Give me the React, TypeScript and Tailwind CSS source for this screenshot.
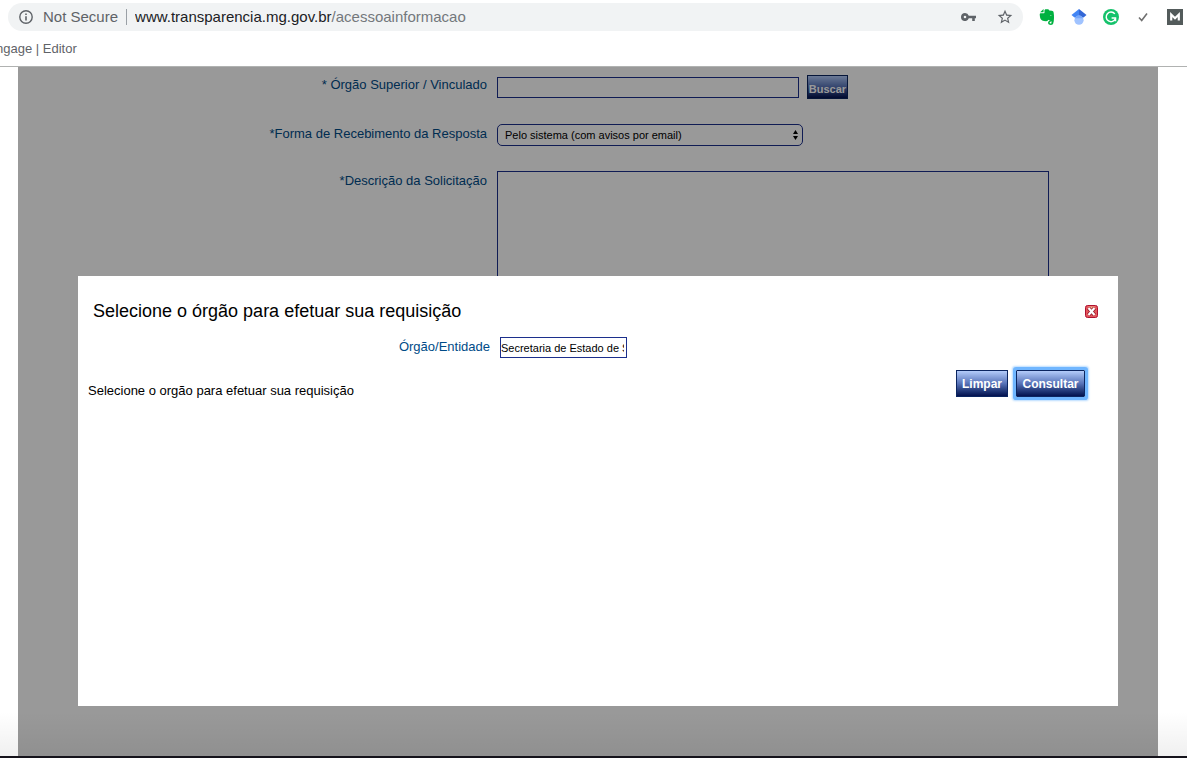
import { useState } from 'react'

const fieldBorder = 'border border-[#1c2f8c] bg-white text-black outline-none'
const buttonStyle =
  'border border-[#0b2560] bg-linear-to-b from-[#b4ccfa] via-[#5873b8] to-[#05114f] font-bold text-white'

function EvernoteIcon() {
  return (
    <svg width="16" height="16" viewBox="0 0 24 24" fill="#00b140" aria-hidden="true">
      <path d="M8.2 5.6V2.4C8.2 1.2 9 .3 10.200 .3h2.500c1.400 0 2.300.8 2.700 2l3.800.5c1.600.2 2.500 1.100 2.800 2.700.5 2.700.6 5.300.5 8-.1 3.300-.4 6.300-1.300 8.800-.5 1.200-1.500 1.700-3.200 1.700-2.600 0-4.400-1.200-4.400-3.300 0-2 1.300-3.100 3.200-3.100h.7v1.900h-.6c-.7 0-1.100.4-1.100 1 0 .8.6 1.200 1.600 1.200.8 0 1.300-.3 1.300-1.200v-2.300c-1.600-.1-3.500-.6-4.400-1.900-.8 1.400-2 2-3.800 1.900-4.400-.1-7.700-1.300-8.600-4.500-.5-1.900-.8-3.800-.8-5.600 0-1.200.7-1.900 1.900-1.900h4.500c.5 0 .7-.2.7-.6z" />
      <path d="M1.700 5L6.800 0v4.400c0 .4-.2.600-.6.600z" />
      <path d="M16.200 10.200c.3-1.300 2.400-1.400 3 .3-1-.3-2-.4-3-.3z" fill="#fff" />
    </svg>
  )
}

function ScholarIcon() {
  return (
    <svg width="16" height="16" viewBox="0 0 16 16" aria-hidden="true">
      <path d="M8 0L0.500 6l3 2.400h4.500z" fill="#4285f4" />
      <path d="M8 0l7.500 6-3 2.400H8z" fill="#3367d6" />
      <circle cx="8" cy="11.200" r="4.600" fill="#a0c3ff" />
      <path d="M3.800 9.300a4.600 4.600 0 0 1 8.400 0z" fill="#76a7fa" />
    </svg>
  )
}

function GrammarlyIcon() {
  return (
    <svg width="16" height="16" viewBox="0 0 16 16" fill="none" aria-hidden="true">
      <circle cx="8" cy="8" r="8" fill="#15c26b" />
      <path d="M11.800 4.900A4.800 4.800 0 1 0 12.500 9.500" stroke="#fff" strokeWidth="1.500" />
      <path d="M8.600 9h3.900v3.200" stroke="#fff" strokeWidth="1.500" />
    </svg>
  )
}

function MIcon() {
  return (
    <svg width="16" height="16" viewBox="0 0 16 16" aria-hidden="true">
      <rect width="16" height="16" fill="#535b5b" />
      <path d="M4.200 11.500V5.500L8 9.200l3.800-3.700v6" fill="none" stroke="#fff" strokeWidth="2.200" />
    </svg>
  )
}

function BrowserBar() {
  return (
    <header className="h-[67px] shrink-0 overflow-hidden border-b border-[#b0b2b1] bg-white pt-[3px] text-[#5f6368]">
      <div className="flex items-center">
        <div className="ml-2 mr-4 flex h-7 min-w-0 flex-1 items-center rounded-full bg-[#f1f3f4] pl-[11px] pr-[10px] text-[15px]">
          <svg width="14" height="14" viewBox="0 0 14 14" className="shrink-0" aria-hidden="true">
            <circle cx="7" cy="7" r="6.200" fill="none" stroke="#5f6368" strokeWidth="1.400" />
            <path d="M6.200 6.200h1.600v4.200H6.200zM6.200 3.500h1.600v1.600H6.200z" fill="#5f6368" />
          </svg>
          <span className="ml-[10px] whitespace-nowrap">Not Secure</span>
          <span className="ml-2 h-4 w-px bg-[#9aa0a6]" />
          <span className="ml-2 flex-1 truncate text-[#202124]">
            www.transparencia.mg.gov.br<span className="text-[#74787c]">/acessoainformacao</span>
          </span>
          <button aria-label="Senhas" className="mr-[21px]">
            <svg width="15" height="8" viewBox="0 0 15 8" fill="#5f6368">
              <path
                fillRule="evenodd"
                d="M4 0a4 4 0 0 1 3.800 2.700H15v2.600h-1.200V8h-2.600V5.300H7.800A4 4 0 1 1 4 0zm0 2.700a1.300 1.300 0 1 0 0 2.600 1.300 1.300 0 0 0 0-2.600z"
              />
            </svg>
          </button>
          <button aria-label="Favoritar">
            <svg width="16" height="16" viewBox="1 1 22 22" fill="#5f6368">
              <path d="M22 9.240l-7.190-.62L12 2 9.190 8.630 2 9.240l5.460 4.730L5.820 21 12 17.270 18.180 21l-1.630-7.030L22 9.240zM12 15.400l-3.760 2.270 1-4.280-3.320-2.880 4.380-.38L12 6.100l1.710 4.040 4.380.38-3.320 2.880 1 4.280L12 15.400z" />
            </svg>
          </button>
        </div>
        <div className="flex shrink-0 items-center gap-4 pr-1">
          <button aria-label="Evernote"><EvernoteIcon /></button>
          <button aria-label="Google Acadêmico"><ScholarIcon /></button>
          <button aria-label="Grammarly"><GrammarlyIcon /></button>
          <button aria-label="Verificar">
            <svg width="16" height="16" viewBox="0 0 16 16" fill="none">
              <path d="M4 8.500l2.700 3L12 4.500" stroke="#707070" strokeWidth="1.600" />
            </svg>
          </button>
          <button aria-label="Mail"><MIcon /></button>
        </div>
      </div>
      <nav className="-ml-1 mt-2 flex text-[13px] leading-5">
        <a href="#engage" className="whitespace-nowrap">ngage | Editor</a>
      </nav>
    </header>
  )
}

function RequestForm() {
  return (
    <form className="grid grid-cols-[469px_1fr] items-start gap-x-[10px] gap-y-[25px] pt-2 text-[13px] leading-5 text-[#004b87]">
      <label htmlFor="orgao" className="text-right">* Órgão Superior / Vinculado</label>
      <div className="flex items-center gap-2">
        <input id="orgao" className={`${fieldBorder} h-[21px] w-[302px]`} />
        <button type="button" className={`${buttonStyle} h-6 w-[41px] pt-1 text-[11px] leading-4`}>
          Buscar
        </button>
      </div>

      <label htmlFor="forma" className="text-right">*Forma de Recebimento da Resposta</label>
      <div className="relative w-[306px]">
        <select
          id="forma"
          className={`${fieldBorder} block h-[22px] w-full appearance-none rounded-[5px] pl-[7px] text-[11px]`}
        >
          <option>Pelo sistema (com avisos por email)</option>
        </select>
        <svg width="5" height="10" viewBox="0 0 5 10" className="pointer-events-none absolute right-[5px] top-[6px]">
          <path d="M2.500 0L5 4H0zM2.500 10L0 6h5z" fill="#000" />
        </svg>
      </div>

      <label htmlFor="descricao" className="text-right">*Descrição da Solicitação</label>
      <textarea id="descricao" className={`${fieldBorder} block h-[180px] w-[552px] resize-none`} />
    </form>
  )
}

function OrgaoDialog({ onClose }: { onClose: () => void }) {
  const [orgao, setOrgao] = useState('Secretaria de Estado de Saúde')

  return (
    <div
      role="dialog"
      aria-labelledby="dialog-title"
      className="absolute bottom-[50px] left-[60px] right-10 top-[209px] bg-white pt-[21px] text-black"
    >
      <div className="flex items-center justify-between pl-[15px] pr-5">
        <h2 id="dialog-title" className="text-lg leading-7">Selecione o órgão para efetuar sua requisição</h2>
        <button aria-label="Fechar" onClick={onClose}>
          <svg width="13" height="13" viewBox="0 0 13 13" className="block">
            <rect x="0.500" y="0.500" width="12" height="12" rx="2" fill="#e2555a" stroke="#b01030" />
            <path d="M3 1.500h7L6.500 5z" fill="#f6b08c" />
            <path d="M3.500 3l6 7M9.500 3l-6 7" stroke="#8f1428" strokeWidth="3.600" />
            <path d="M3.500 3l6 7M9.500 3l-6 7" stroke="#fff" strokeWidth="2.200" />
          </svg>
        </button>
      </div>

      <div className="mt-3 grid grid-cols-[412px_1fr] gap-x-[10px] text-[13px] leading-5">
        <label htmlFor="entidade" className="text-right text-[#004b87]">Órgão/Entidade</label>
        <input
          id="entidade"
          value={orgao}
          onChange={(e) => setOrgao(e.target.value)}
          className={`${fieldBorder} h-[21px] w-[127px] pr-[2px] text-[11px]`}
        />
      </div>

      <div className="mt-3 flex items-start justify-between pl-[10px] pr-[33px]">
        <p className="mt-[11px] text-[13px] leading-5">Selecione o orgão para efetuar sua requisição</p>
        <div className="flex gap-2 text-xs">
          <button className={`${buttonStyle} h-[27px] w-[52px]`} onClick={() => setOrgao('')}>Limpar</button>
          <button className={`${buttonStyle} h-[27px] w-[69px] rounded-[1px] shadow-[0_0_0_3px_#70b6ff,0_0_2px_4px_#b9dcff]`}>
            Consultar
          </button>
        </div>
      </div>
    </div>
  )
}

export default function App() {
  const [aberto, setAberto] = useState(true)

  return (
    <div className="flex h-screen flex-col overflow-hidden bg-white font-['Liberation_Sans',Arial,sans-serif]">
      <BrowserBar />
      <div className="relative flex min-h-0 flex-1 flex-col pl-[18px] pr-[29px]">
        <main className="relative flex-1 overflow-hidden">
          <RequestForm />
          {aberto && (
            <>
              <div className="absolute inset-0 bg-black/40" />
              <OrgaoDialog onClose={() => setAberto(false)} />
            </>
          )}
        </main>
        {/* sombra do dock no fim da janela */}
        <div className="pointer-events-none absolute inset-x-0 bottom-0 h-11 bg-linear-to-b from-transparent to-black/6" />
      </div>
      <div className="h-[2px] shrink-0 bg-[#15131b]" />
    </div>
  )
}
